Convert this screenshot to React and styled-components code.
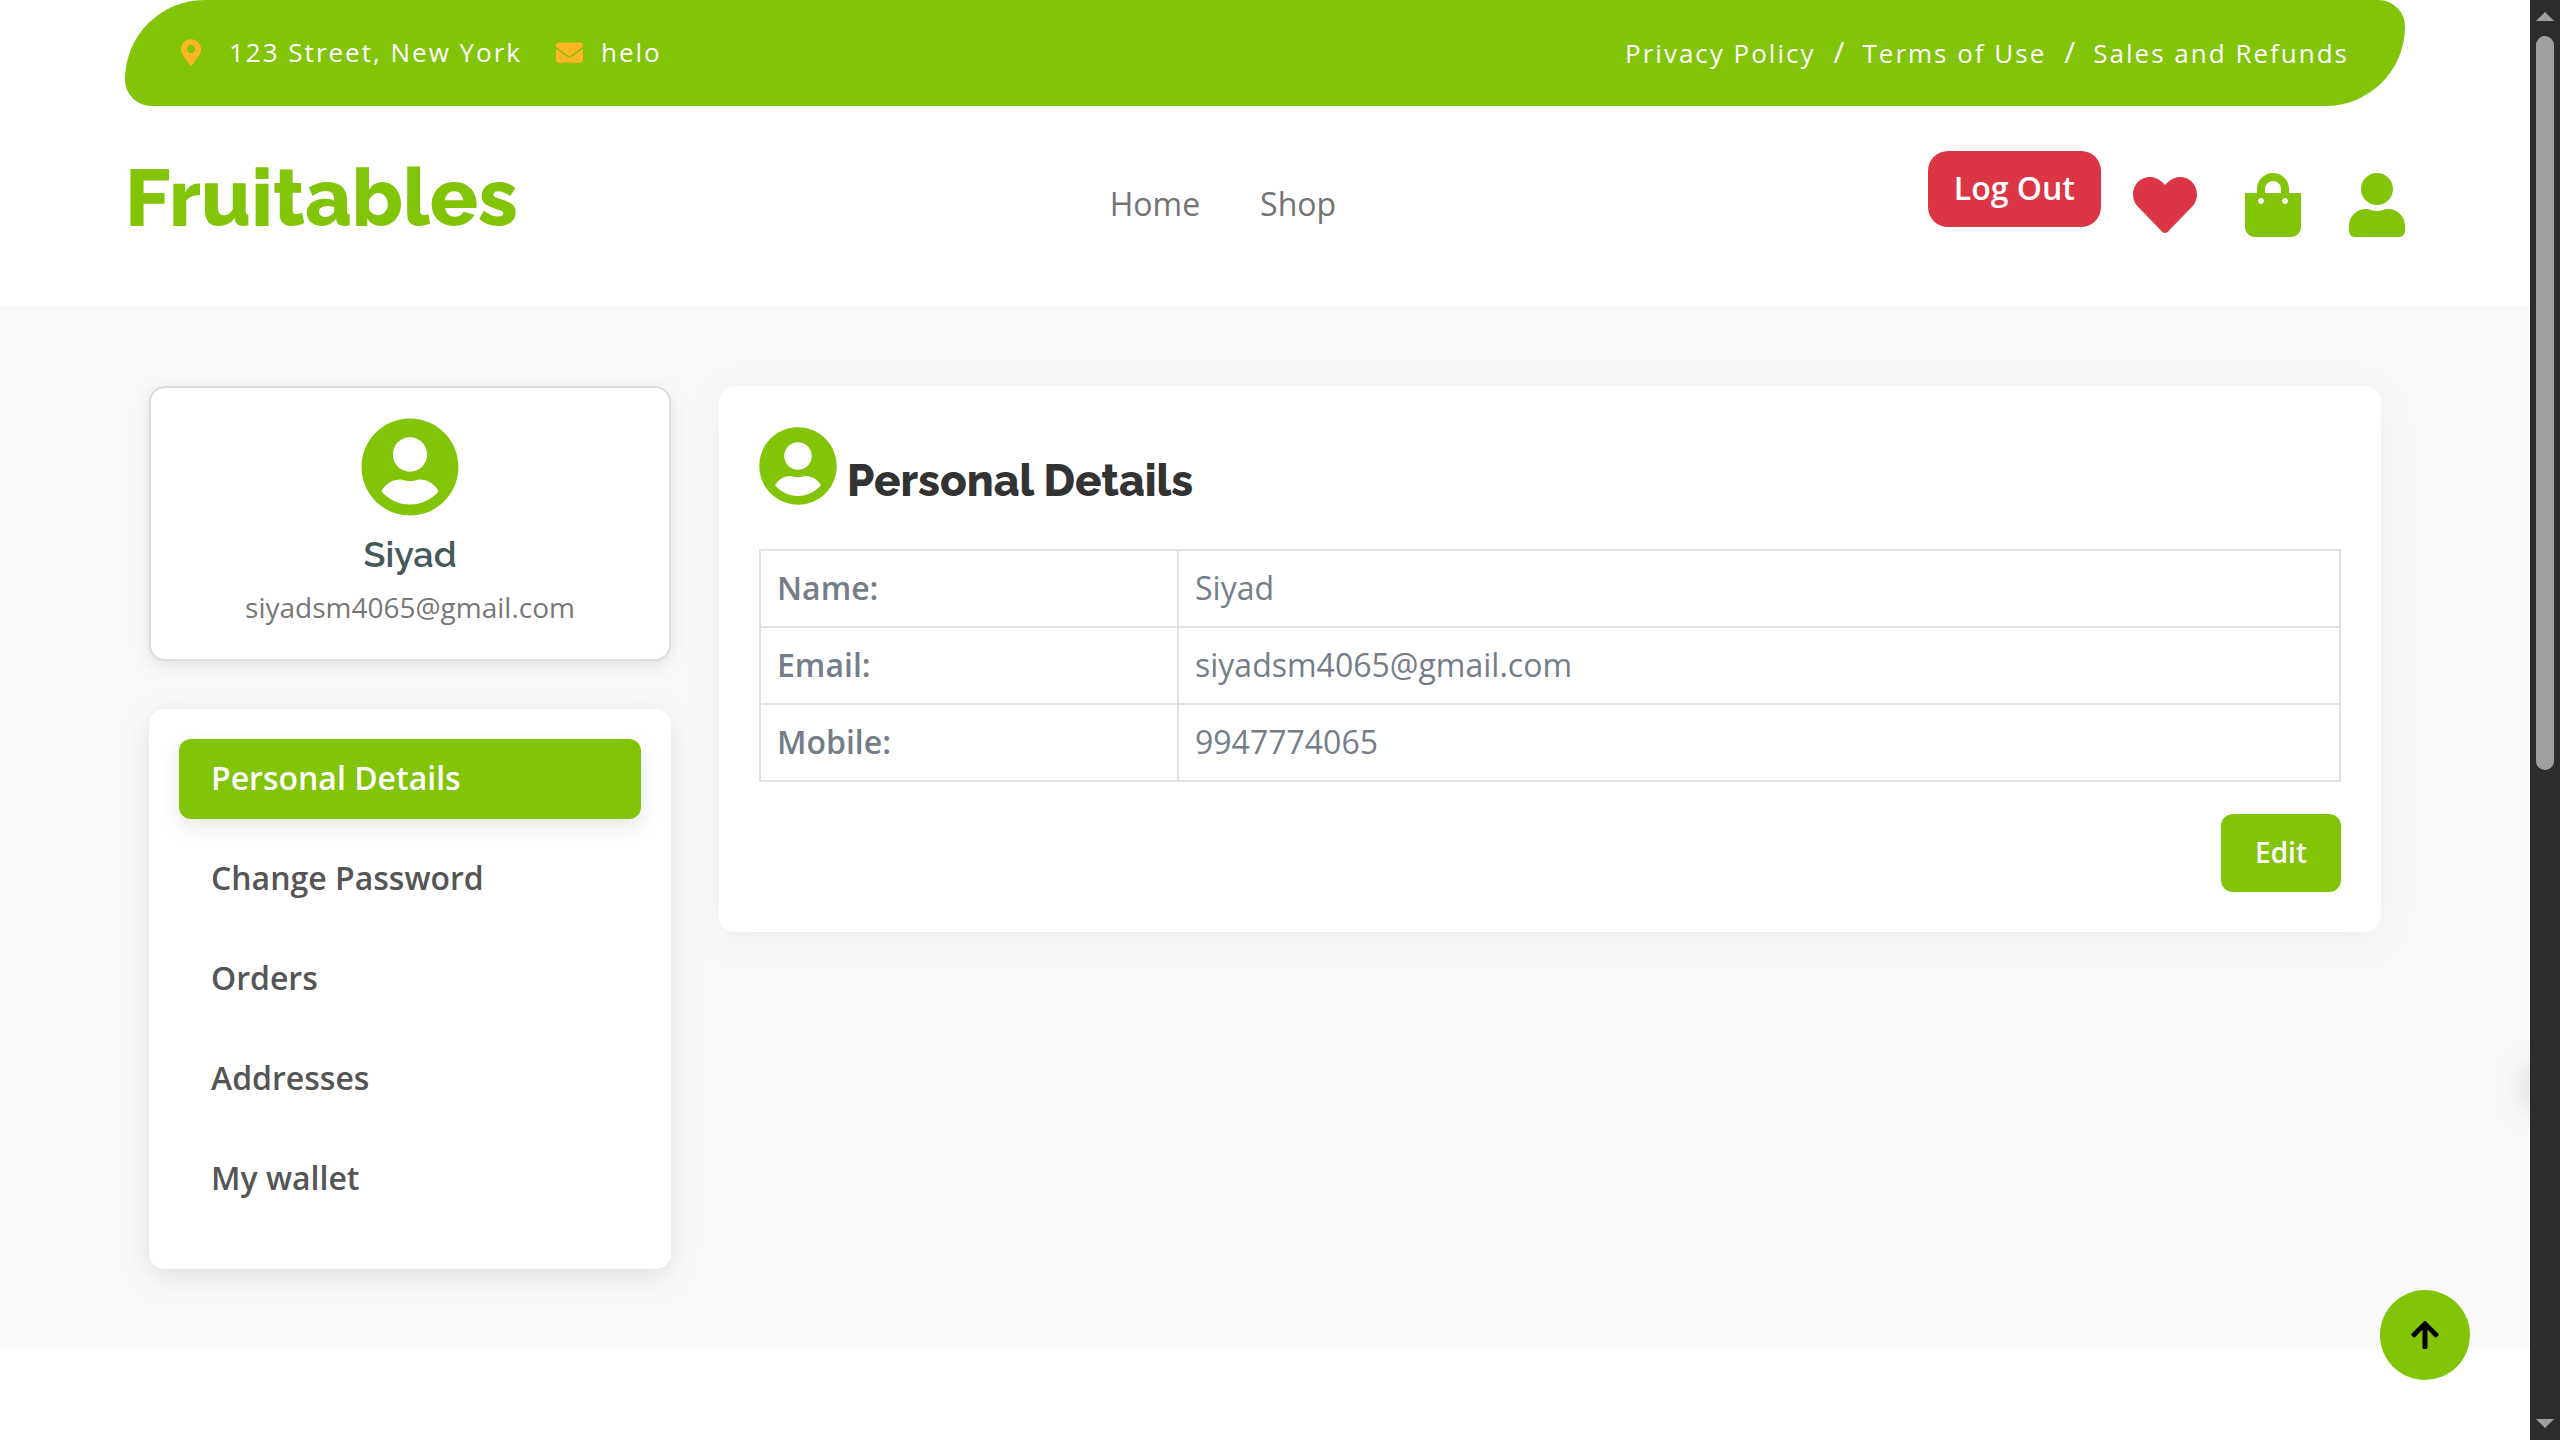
import React from "react";
import styled, { createGlobalStyle } from "styled-components";
import {
  FaArrowUp,
  FaEnvelope,
  FaHeart,
  FaMapMarkerAlt,
  FaShoppingBag,
  FaUser,
  FaUserCircle,
} from "react-icons/fa";

const green = "#81c408";
const orange = "#ffb524";
const red = "#dc3545";
const bodyFont = '"Open Sans", "Noto Sans", sans-serif';
const headingFont = 'Raleway, Lato, "Open Sans", sans-serif';

const GlobalStyle = createGlobalStyle`
  *, *::before, *::after { box-sizing: border-box; }
  body {
    margin: 0;
    background: #fff;
    font-family: ${bodyFont};
    font-size: 32px;
    line-height: 42px;
    color: #747d88;
  }
  a { color: inherit; text-decoration: none; }
  button { border: 0; margin: 0; font: inherit; cursor: pointer; }
  svg { display: block; flex: none; }
`;

const Shell = styled.div`
  display: flex;
  align-items: flex-start;
  height: 100vh;
  overflow: hidden;
`;

const Page = styled.div`
  position: relative;
  flex: 1;
  min-width: 0;
  height: 100%;
  overflow: hidden;
`;

const Container = styled.div`
  width: 100%;
  max-width: 2280px;
  margin: 0 auto;
`;

const TopBar = styled(Container)`
  display: flex;
  align-items: center;
  justify-content: space-between;
  height: 106px;
  padding: 0 56px 2px;
  border-radius: 300px 100px;
  background: ${green};
  color: #fff;
  font-size: 26px;
`;

const ContactList = styled.div`
  display: flex;
  align-items: center;
  gap: 34px;
`;

const Contact = styled.a`
  display: flex;
  align-items: center;
  gap: ${(p) => p.$gap}px;
  letter-spacing: 2px;

  svg {
    color: ${orange};
    width: ${(p) => p.$icon}px;
    height: 27px;
  }
`;

const Legal = styled.nav`
  display: flex;
  align-items: baseline;
  gap: 18px;

  a { letter-spacing: 2px; }
  span { font-size: 30px; }
`;

const Header = styled(Container)`
  display: flex;
  align-items: flex-start;
  justify-content: space-between;
  padding: 45px 0 61px;
`;

const Brand = styled.a`
  color: ${green};
  font-family: ${headingFont};
  font-size: 80px;
  font-weight: 800;
  line-height: 94px;
`;

const MainNav = styled.nav`
  display: flex;
  gap: 60px;
  padding-top: 32px;
  color: #737373;
`;

const Actions = styled.div`
  display: flex;
  align-items: flex-start;
  gap: 32px;
`;

const LogOut = styled.button`
  height: 76px;
  padding: 0 26px 2px;
  border-radius: 20px;
  background: ${red};
  color: #fff;
  font-weight: 600;
`;

const IconLinks = styled.div`
  display: flex;
  gap: 48px;
  padding-top: 22px;
`;

const IconLink = styled.a`
  color: ${(p) => p.$color};

  svg {
    width: ${(p) => p.$width}px;
    height: 64px;
  }
`;

const Account = styled.main`
  padding: 80px 0;
  background: #f9f9f9;
`;

const Columns = styled(Container)`
  display: grid;
  grid-template-columns: minmax(0, 522fr) minmax(0, 1662fr);
  align-items: start;
  gap: 48px;
  padding: 0 24px;
`;

const Sidebar = styled.aside`
  display: grid;
  gap: 48px;
`;

const ProfileCard = styled.section`
  display: flex;
  flex-direction: column;
  align-items: center;
  gap: 10px;
  padding: 29px 30px 36px;
  border: 2px solid #ddd;
  border-radius: 16px;
  background: #fff;
  box-shadow: 0 4px 16px rgba(0, 0, 0, 0.1);
`;

const Avatar = styled(FaUserCircle)`
  width: ${(p) => p.$size - 2}px;
  height: ${(p) => p.$size}px;
  color: ${green};
`;

const ProfileName = styled.h2`
  margin: 0;
  color: #45595b;
  font-family: ${headingFont};
  font-size: 36px;
  font-weight: 600;
  line-height: 54px;
`;

const ProfileEmail = styled.p`
  margin: 0;
  color: #777;
  font-size: 28px;
  line-height: 32px;
`;

const MenuCard = styled.nav`
  padding: 30px;
  border-radius: 16px;
  background: #fff;
  box-shadow: 0 8px 30px rgba(0, 0, 0, 0.1);
`;

const MenuItem = styled.a`
  display: block;
  margin-bottom: 20px;
  padding: 18px 32px 20px;
  border-radius: 12px;
  background: ${(p) => (p.$active ? green : "transparent")};
  color: ${(p) => (p.$active ? "#fff" : "#555")};
  font-weight: 600;
  box-shadow: ${(p) => (p.$active ? "0 8px 20px rgba(0, 0, 0, 0.1)" : "none")};
`;

const DetailsCard = styled.section`
  padding: 40px;
  border-radius: 16px;
  background: #fff;
  box-shadow: 0 8px 40px rgba(0, 0, 0, 0.05);
`;

const DetailsHeader = styled.header`
  display: flex;
  align-items: flex-end;
  gap: 10px;
  margin-bottom: 43px;
`;

const DetailsTitle = styled.h1`
  margin: 0;
  color: #333;
  font-family: ${headingFont};
  font-size: 44px;
  font-weight: 800;
  line-height: 50px;
`;

const DetailsTable = styled.table`
  width: 100%;
  border-collapse: collapse;
  table-layout: fixed;

  th, td {
    height: 77px;
    padding: 0 16px 2px;
    border: 2px solid #dee2e6;
    text-align: left;
    font-weight: 400;
  }

  th {
    width: 418px;
    font-weight: 600;
  }
`;

const DetailsFooter = styled.div`
  display: flex;
  justify-content: flex-end;
  margin-top: 32px;
`;

const EditButton = styled.button`
  width: 120px;
  height: 78px;
  padding: 0 0 2px;
  border-radius: 12px;
  background: ${green};
  color: #fff;
  font-size: 28px;
  font-weight: 600;
`;

const BackToTop = styled.a`
  position: absolute;
  right: 60px;
  bottom: 60px;
  display: flex;
  align-items: center;
  justify-content: center;
  width: 90px;
  height: 90px;
  border-radius: 50%;
  background: ${green};
  color: #000;
`;

const DrawerEdge = styled.div`
  position: absolute;
  left: 100%;
  bottom: 338px;
  width: 30px;
  height: 30px;
  border-radius: 50%;
  box-shadow: 0 0 36px rgba(0, 0, 0, 0.3);
`;

const ScrollRail = styled.div`
  display: flex;
  flex-direction: column;
  align-items: center;
  width: 30px;
  height: 100%;
  padding: 12px 0;
  background: #2c2c2c;
  color: #9f9f9f;
`;

const ScrollThumb = styled.div`
  flex: none;
  width: 18px;
  height: 51vh;
  margin: 15px 0 auto;
  border-radius: 9px;
  background: currentColor;
`;

const details = [
  ["Name:", "Siyad"],
  ["Email:", "siyadsm4065@gmail.com"],
  ["Mobile:", "9947774065"],
];

const menu = ["Personal Details", "Change Password", "Orders", "Addresses", "My wallet"];

export default function App() {
  return (
    <>
      <GlobalStyle />
      <Shell>
        <Page>
          <TopBar>
            <ContactList>
              <Contact href="#" $gap={28} $icon={20}>
                <FaMapMarkerAlt />
                123 Street, New York
              </Contact>
              <Contact href="#" $gap={18} $icon={27}>
                <FaEnvelope />
                helo
              </Contact>
            </ContactList>
            <Legal>
              <a href="#">Privacy Policy</a>
              <span>/</span>
              <a href="#">Terms of Use</a>
              <span>/</span>
              <a href="#">Sales and Refunds</a>
            </Legal>
          </TopBar>

          <Header>
            <Brand href="#">Fruitables</Brand>
            <MainNav>
              <a href="#">Home</a>
              <a href="#">Shop</a>
            </MainNav>
            <Actions>
              <LogOut type="button">Log Out</LogOut>
              <IconLinks>
                <IconLink href="#" aria-label="Wishlist" $color={red} $width={64}>
                  <FaHeart />
                </IconLink>
                <IconLink href="#" aria-label="Cart" $color={green} $width={56}>
                  <FaShoppingBag />
                </IconLink>
                <IconLink href="#" aria-label="Account" $color={green} $width={56}>
                  <FaUser />
                </IconLink>
              </IconLinks>
            </Actions>
          </Header>

          <Account>
            <Columns>
              <Sidebar>
                <ProfileCard>
                  <Avatar $size={100} />
                  <ProfileName>Siyad</ProfileName>
                  <ProfileEmail>siyadsm4065@gmail.com</ProfileEmail>
                </ProfileCard>
                <MenuCard>
                  {menu.map((label, i) => (
                    <MenuItem key={label} href="#" $active={i === 0}>
                      {label}
                    </MenuItem>
                  ))}
                </MenuCard>
              </Sidebar>

              <DetailsCard>
                <DetailsHeader>
                  <Avatar $size={80} />
                  <DetailsTitle>Personal Details</DetailsTitle>
                </DetailsHeader>
                <DetailsTable>
                  <tbody>
                    {details.map(([label, value]) => (
                      <tr key={label}>
                        <th scope="row">{label}</th>
                        <td>{value}</td>
                      </tr>
                    ))}
                  </tbody>
                </DetailsTable>
                <DetailsFooter>
                  <EditButton type="button">Edit</EditButton>
                </DetailsFooter>
              </DetailsCard>
            </Columns>
          </Account>

          <DrawerEdge />
          <BackToTop href="#" aria-label="Back to top">
            <FaArrowUp />
          </BackToTop>
        </Page>

        <ScrollRail aria-hidden="true">
          <svg width="18" height="9" viewBox="0 0 18 9" fill="currentColor">
            <path d="M9 0 18 9H0z" />
          </svg>
          <ScrollThumb />
          <svg width="18" height="9" viewBox="0 0 18 9" fill="currentColor">
            <path d="M0 0h18L9 9z" />
          </svg>
        </ScrollRail>
      </Shell>
    </>
  );
}
